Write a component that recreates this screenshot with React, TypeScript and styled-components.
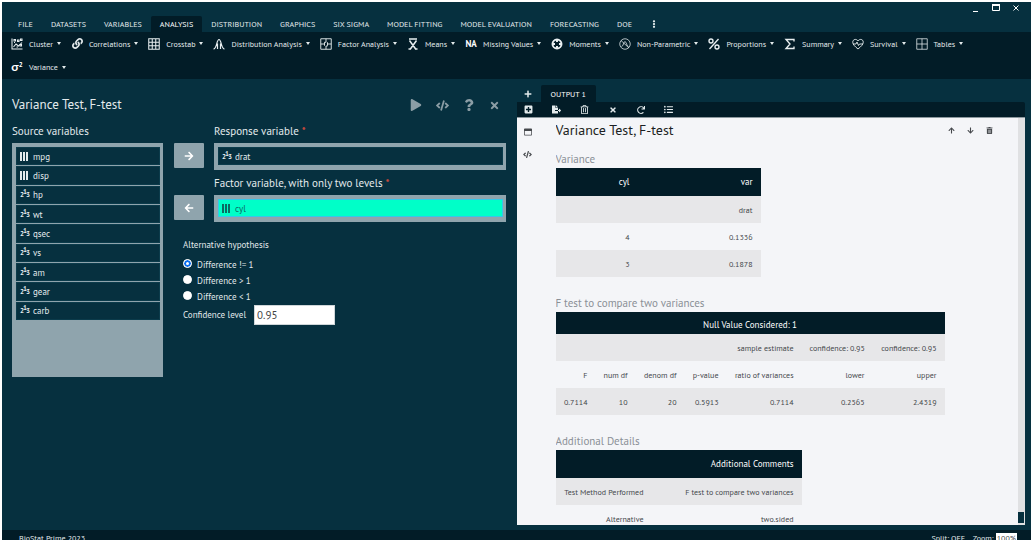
import React from "react";
import styled, { createGlobalStyle, css } from "styled-components";
import {
  FaArrowDown,
  FaArrowLeft,
  FaArrowRight,
  FaArrowUp,
  FaCode,
  FaEllipsisV,
  FaFileExport,
  FaLink,
  FaListUl,
  FaPlay,
  FaPlus,
  FaPlusSquare,
  FaQuestion,
  FaRedo,
  FaTimes,
  FaTrashAlt,
  FaRegTrashAlt,
  FaRegWindowMaximize,
} from "react-icons/fa";

const color = {
  base: "#06303f",
  dark: "#021c27",
  slate: "#8fa4ad",
  light: "#e3eaec",
  accent: "#00ffc8",
  paper: "#f4f5f8",
  stripe: "#e7e7e9",
};

const GlobalStyle = createGlobalStyle`
  *, *::before, *::after { box-sizing: border-box; }
  html, body { margin: 0; background: #fff; }
  body { font-family: "PT Sans", Lato, "Liberation Sans", sans-serif; font-size: 8px; line-height: 12px; }
  button, input { font: inherit; color: inherit; }
  button { margin: 0; padding: 0; border: 0; background: none; cursor: pointer; }
  h1, h2, p, ul { margin: 0; padding: 0; font-weight: 400; }
  svg { display: block; flex: none; }
`;

const Frame = styled.div`
  height: 100vh;
  padding: 2px;
  overflow: hidden;
`;

const Window = styled.div`
  height: 100%;
  display: flex;
  flex-direction: column;
  background: ${color.base};
  color: ${color.light};
  overflow: hidden;
`;

const TitleBar = styled.header`
  display: flex;
  justify-content: space-between;
  align-items: flex-end;
  height: 30px;
  flex: none;
  padding-left: 7px;
`;

const Tabs = styled.nav`
  display: flex;
`;

const Tab = styled.button<{ $active?: boolean }>`
  height: 16px;
  padding: 0 9px;
  border-radius: 2px 2px 0 0;
  white-space: nowrap;
  ${(p) => p.$active && css`background: ${color.dark}; color: #fff;`}
`;

const WindowControls = styled.div`
  display: flex;
  gap: 12px;
  align-self: flex-start;
  padding: 1px 11px 0 0;
`;

const Ribbon = styled.div`
  display: flex;
  flex-wrap: wrap;
  flex: none;
  column-gap: 9px;
  min-height: 47px;
  padding: 0 8px;
  background: ${color.dark};
`;

const RibbonItem = styled.button`
  display: flex;
  align-items: center;
  height: 23px;
  white-space: nowrap;
`;

const RibbonIcon = styled.span`
  display: grid;
  place-items: center;
  width: 14px;
  margin-right: 5px;
`;

const Caret = styled.span`
  margin-left: 4px;
  border: 2px solid transparent;
  border-top: 3px solid ${color.light};
  border-bottom: 0;
`;

const Bold = styled.span<{ $size: number }>`
  font-size: ${(p) => p.$size}px;
  font-weight: 700;
  color: #fff;
  sup { font-size: 7px; line-height: 1px; vertical-align: 4px; }
`;

const Main = styled.main`
  flex: 1;
  min-height: 0;
  display: grid;
  grid-template-columns: minmax(0, 1fr) minmax(0, 1fr);
`;

const Dialog = styled.section`
  padding: 16px 11px 0 10px;
`;

const DialogHead = styled.div`
  display: flex;
  justify-content: space-between;
  align-items: center;
  height: 20px;
  padding-right: 6px;
`;

const DialogTitle = styled.h1`
  font-size: 13px;
  line-height: 20px;
`;

const DialogActions = styled.div`
  display: flex;
  align-items: center;
  gap: 14px;
  color: #8b9da5;
  button { display: grid; place-items: center; min-width: 10px; }
`;

const DialogBody = styled.div`
  display: grid;
  grid-template-columns: 151px minmax(0, 1fr);
  column-gap: 11px;
  padding-top: 9px;
`;

const Label = styled.h2`
  font-size: 11px;
  line-height: 14px;
  padding-bottom: 5px;
`;

const Required = styled.span`
  color: #f0503c;
`;

const Well = styled.ul<{ $tall?: boolean }>`
  list-style: none;
  padding: 4px 3px 4px 4px;
  background: ${color.slate};
  height: ${(p) => (p.$tall ? "234px" : "27px")};
`;

const Rows = styled.div`
  display: grid;
  grid-auto-rows: 1fr;
  gap: 1px;
  height: 173px;
`;

const Variable = styled.li<{ $selected?: boolean }>`
  display: flex;
  align-items: center;
  gap: 3px;
  min-height: 18px;
  padding: 1px 3px 0;
  background: ${(p) => (p.$selected ? color.accent : color.base)};
  color: ${(p) => (p.$selected ? "#0b6a62" : color.light)};
  border: 1px solid ${(p) => (p.$selected ? "#37c6e8" : "#0b3b4b")};
  font-size: 9px;
`;

const Digits = styled.span`
  width: 10px;
  font-size: 7px;
  font-weight: 700;
  line-height: 8px;
  white-space: nowrap;
  sup { font-size: 7px; line-height: 1px; margin: 0 -1px; vertical-align: 3px; }
`;

const Field = styled.div`
  display: grid;
  grid-template-columns: 30px minmax(0, 1fr);
  column-gap: 10px;
  align-items: end;
  padding-bottom: 6px;
`;

const MoveButton = styled.button`
  align-self: end;
  display: grid;
  place-items: center;
  height: 25px;
  margin-bottom: 2px;
  border-radius: 1px;
  background: ${color.slate};
  color: #fff;
`;

const Options = styled.fieldset`
  margin: 10px 0 0 9px;
  padding: 0;
  border: 0;
  min-width: 0;
  font-size: 9px;
  legend { padding: 0; margin-bottom: 5px; line-height: 14px; }
`;

const Choice = styled.label`
  display: flex;
  align-items: center;
  gap: 5px;
  height: 16px;
  input {
    appearance: none;
    width: 9px;
    height: 9px;
    margin: 0 0 3px;
    border: 1px solid #fff;
    border-radius: 50%;
    background: #fff;
  }
  input:checked { box-shadow: inset 0 0 0 2px #0a6ff0; }
`;

const NumberField = styled.label`
  display: flex;
  align-items: center;
  gap: 8px;
  input {
    width: 81px;
    height: 20px;
    padding: 0 2px;
    border: 1px solid #cfd6d9;
    background: #fff;
    color: #444;
    font-size: 11px;
  }
`;

const Output = styled.section`
  display: flex;
  flex-direction: column;
  min-height: 0;
  padding: 6px 6px 5px 0;
`;

const OutputTabs = styled.div`
  display: flex;
  align-items: center;
  height: 17px;
  flex: none;
  padding-left: 7px;
  gap: 9px;
`;

const OutputTab = styled(Tab)`
  height: 17px;
  padding: 0 10px;
`;

const OutputTools = styled.div`
  display: flex;
  align-items: center;
  gap: 18px;
  flex: none;
  height: 16px;
  padding-left: 7px;
  background: ${color.dark};
  border-radius: 0 2px 0 0;
  border-bottom: 1px solid #8c989e;
  button { display: grid; place-items: center; width: 10px; }
`;

const Report = styled.div`
  flex: 1;
  min-height: 0;
  display: grid;
  grid-template-columns: 39px minmax(0, 1fr) 7px;
  overflow: hidden;
  background: ${color.paper};
  color: #45484c;
`;

const SideTools = styled.div`
  display: flex;
  flex-direction: column;
  align-items: center;
  gap: 14px;
  width: 22px;
  padding-top: 10px;
`;

const ReportBody = styled.div`
  overflow: hidden;
`;

const ReportHead = styled.div`
  display: flex;
  align-items: center;
  justify-content: space-between;
  height: 24px;
  padding-right: 25px;
`;

const ReportTitle = styled.h1`
  font-size: 14px;
  color: #1c1f22;
`;

const ReportActions = styled.div`
  display: flex;
  gap: 12px;
`;

const Scroll = styled.div`
  display: flex;
  flex-direction: column;
  justify-content: flex-end;
  padding-bottom: 2px;
  background: #e0e1e3;
`;

const Thumb = styled.div`
  height: 11px;
  margin-right: 1px;
  background: ${color.base};
`;

const TableBlock = styled.section`
  padding: 10px 0 9px;
`;

const Caption = styled.h2`
  font-size: 11px;
  line-height: 14px;
  padding-bottom: 2px;
  color: #8b9097;
`;

const Table = styled.table<{ $width: number; $short?: boolean }>`
  width: ${(p) => p.$width}px;
  max-width: 100%;
  table-layout: fixed;
  border-collapse: collapse;
  th, td {
    height: 27px;
    padding: 0 8px;
    text-align: right;
    white-space: nowrap;
    font-weight: 400;
  }
  thead th {
    height: ${(p) => (p.$short ? 22 : 28)}px;
    background: ${color.dark};
    color: #fff;
    font-size: 9px;
    ${(p) => p.$short && css`text-align: center; padding-top: 4px;`}
  }
  tbody tr:nth-child(odd) { background: ${color.stripe}; }
`;

const Status = styled.footer`
  display: flex;
  justify-content: space-between;
  height: 10px;
  flex: none;
  padding: 3px 14px 0 17px;
  background: ${color.dark};
  overflow: hidden;
  line-height: 10px;
`;

const StatusGroup = styled.div`
  display: flex;
  gap: 8px;
`;

const Zoom = styled.span`
  display: inline-block;
  background: #fff;
  color: #444;
  padding: 0 1px;
`;

const Line = ({ children, w = 1.4, size = 12 }: { children: React.ReactNode; w?: number; size?: number }) => (
  <svg width={size} height={size} viewBox="0 0 24 24" fill="none" stroke="#e9eff1" strokeWidth={w * 1.5} aria-hidden>
    {children}
  </svg>
);

const ClusterIcon = () => (
  <Line w={1.4}>
    <path d="M2 1v21h21M5 18l5-6 5 4 7-7" />
    <path d="M6 3h3v3H6zM13 4h3v3h-3zM19 2h3v3h-3zM6 9h2M18 13h3v3h-3zM11 18h3" />
  </Line>
);
const GridIcon = () => (
  <Line w={1.4}>
    <path d="M1.500 1.500h21v21h-21zM8.500 1.500v21M15.500 1.500v21M1.500 8.500h21M1.500 15.500h21" />
  </Line>
);
const CurveIcon = () => (
  <Line w={1.600}>
    <path d="M1 22c7 0 6-19 11-19s4 19 11 19M9 22V11M15 22V11" />
  </Line>
);
const FactorIcon = () => (
  <Line w={1.200}>
    <path d="M1.500 1.500h21v21h-21zM12 1.500v7M12 16v6.500M1.500 12H9M15 12h7.500M9 8.500v7M15 8.500v7M9 8.500h3M12 16h3" />
  </Line>
);
const MeansIcon = () => (
  <Line w={2}>
    <path d="M4 2h16M5 5l13 18M19 5L6 23M3 22h5M16 22h5" />
  </Line>
);
const MomentsIcon = () => (
  <Line w={2.6}>
    <circle cx="12" cy="12" r="9" />
    <path d="M12 3v5M12 16v5M3 12h5M16 12h5" />
  </Line>
);
const NonParamIcon = () => (
  <Line w={1}>
    <circle cx="12" cy="12" r="10.500" />
    <path d="M4 5l16 15M5 17c4 0 4-10 7-10s3 10 7 10" />
  </Line>
);
const PercentIcon = () => (
  <Line w={1.8}>
    <circle cx="6" cy="6" r="4" />
    <circle cx="18" cy="18" r="4" />
    <path d="M21 2L3 22" />
  </Line>
);
const SumIcon = () => (
  <Line w={1.8}>
    <path d="M20 7V3H4l8 9-8 9h16v-4" />
  </Line>
);
const HeartIcon = () => (
  <Line w={1.2}>
    <path d="M12 22C6 17 1.500 13 1.500 8.500 1.500 2 9 1 12 6c3-5 10.500-4 10.500 2.500C22.500 13 18 17 12 22z" />
    <path d="M2 12h6l2-4 3 7 2-3h7" />
  </Line>
);
const TableIcon = () => (
  <Line w={1}>
    <path d="M1.500 1.500h21v21h-21zM12 1.500v21M1.500 12h21" />
  </Line>
);
const BarsIcon = () => (
  <svg width="10" height="9" viewBox="0 0 10 9" fill="currentColor" aria-hidden>
    <path d="M0 0h2v9H0zM3 0h2v9h-2zM6 0h2v9H6z" />
  </svg>
);

const menu = [
  "FILE", "DATASETS", "VARIABLES", "ANALYSIS", "DISTRIBUTION", "GRAPHICS", "SIX SIGMA",
  "MODEL FITTING", "MODEL EVALUATION", "FORECASTING", "DOE",
];

const ribbon: [string, React.ReactNode][] = [
  ["Cluster", <ClusterIcon />],
  ["Correlations", <FaLink size={11} />],
  ["Crosstab", <GridIcon />],
  ["Distribution Analysis", <CurveIcon />],
  ["Factor Analysis", <FactorIcon />],
  ["Means", <MeansIcon />],
  ["Missing Values", <Bold $size={9}>NA</Bold>],
  ["Moments", <MomentsIcon />],
  ["Non-Parametric", <NonParamIcon />],
  ["Proportions", <PercentIcon />],
  ["Summary", <SumIcon />],
  ["Survival", <HeartIcon />],
  ["Tables", <TableIcon />],
  ["Variance", <Bold $size={12}>σ<sup>2</sup></Bold>],
];

const sources: [string, boolean][] = [
  ["mpg", true], ["disp", true], ["hp", false], ["wt", false], ["qsec", false],
  ["vs", false], ["am", false], ["gear", false], ["carb", false],
];

const VariableRow = ({ name, factor, selected }: { name: string; factor?: boolean; selected?: boolean }) => (
  <Variable $selected={selected}>
    {factor ? <BarsIcon /> : <Digits>2<sup>1</sup>3</Digits>}
    {name}
  </Variable>
);

export default function App() {
  return (
    <Frame>
      <GlobalStyle />
      <Window>
        <TitleBar>
          <Tabs>
            {menu.map((m) => (
              <Tab key={m} $active={m === "ANALYSIS"}>{m}</Tab>
            ))}
            <Tab aria-label="More"><FaEllipsisV size={8} /></Tab>
          </Tabs>
          <WindowControls>
            <button aria-label="Minimize">
              <svg width="8" height="10" viewBox="0 0 8 10"><path d="M1 8.500h5" stroke="#fff" /></svg>
            </button>
            <button aria-label="Maximize">
              <svg width="8" height="10" viewBox="0 0 8 10"><path d="M0.500 2h7M0.500 2v5.500h7V2" stroke="#fff" fill="none" /><path d="M0 2h8" stroke="#fff" strokeWidth="2" /></svg>
            </button>
            <button aria-label="Close">
              <svg width="8" height="10" viewBox="0 0 8 10"><path d="M1.500 2.500l5 5M6.500 2.500l-5 5" stroke="#fff" /></svg>
            </button>
          </WindowControls>
        </TitleBar>

        <Ribbon>
          {ribbon.map(([name, icon]) => (
            <RibbonItem key={name}>
              <RibbonIcon>{icon}</RibbonIcon>
              {name}
              <Caret />
            </RibbonItem>
          ))}
        </Ribbon>

        <Main>
          <Dialog>
            <DialogHead>
              <DialogTitle>Variance Test, F-test</DialogTitle>
              <DialogActions>
                <button aria-label="Run"><FaPlay size={12} /></button>
                <button aria-label="Code"><FaCode size={13} /></button>
                <button aria-label="Help"><FaQuestion size={12} /></button>
                <button aria-label="Close"><FaTimes size={11} /></button>
              </DialogActions>
            </DialogHead>
            <DialogBody>
              <div>
                <Label>Source variables</Label>
                <Well as="div" $tall>
                  <Rows as="ul">
                    {sources.map(([n, f]) => <VariableRow key={n} name={n} factor={f} />)}
                  </Rows>
                </Well>
              </div>
              <div>
                <Field>
                  <MoveButton aria-label="Move right"><FaArrowRight size={10} /></MoveButton>
                  <div>
                    <Label>Response variable <Required>*</Required></Label>
                    <Well><VariableRow name="drat" /></Well>
                  </div>
                </Field>
                <Field>
                  <MoveButton aria-label="Move left"><FaArrowLeft size={10} /></MoveButton>
                  <div>
                    <Label>Factor variable, with only two levels <Required>*</Required></Label>
                    <Well><VariableRow name="cyl" factor selected /></Well>
                  </div>
                </Field>
                <Options>
                  <legend>Alternative hypothesis</legend>
                  {["Difference != 1", "Difference > 1", "Difference < 1"].map((t, i) => (
                    <Choice key={t}>
                      <input type="radio" name="alternative" defaultChecked={i === 0} />
                      {t}
                    </Choice>
                  ))}
                  <NumberField>
                    Confidence level
                    <input type="text" defaultValue="0.95" />
                  </NumberField>
                </Options>
              </div>
            </DialogBody>
          </Dialog>

          <Output>
            <OutputTabs>
              <button aria-label="New output"><FaPlus size={8} /></button>
              <OutputTab $active>OUTPUT 1</OutputTab>
            </OutputTabs>
            <OutputTools>
              <button aria-label="Add"><FaPlusSquare size={9} /></button>
              <button aria-label="Export"><FaFileExport size={9} /></button>
              <button aria-label="Delete"><FaRegTrashAlt size={9} /></button>
              <button aria-label="Clear"><FaTimes size={8} /></button>
              <button aria-label="Refresh"><FaRedo size={8} /></button>
              <button aria-label="List"><FaListUl size={9} /></button>
            </OutputTools>
            <Report>
              <SideTools>
                <button aria-label="Window"><FaRegWindowMaximize size={8} /></button>
                <button aria-label="Source"><FaCode size={9} /></button>
              </SideTools>
              <ReportBody>
                <ReportHead>
                  <ReportTitle>Variance Test, F-test</ReportTitle>
                  <ReportActions>
                    <button aria-label="Move up"><FaArrowUp size={7} /></button>
                    <button aria-label="Move down"><FaArrowDown size={7} /></button>
                    <button aria-label="Remove"><FaTrashAlt size={7} /></button>
                  </ReportActions>
                </ReportHead>

                <TableBlock>
                  <Caption>Variance</Caption>
                  <Table $width={205}>
                    <colgroup><col width={82} /><col /></colgroup>
                    <thead><tr><th>cyl</th><th>var</th></tr></thead>
                    <tbody>
                      <tr><td /><td>drat</td></tr>
                      <tr><td>4</td><td>0.1336</td></tr>
                      <tr><td>3</td><td>0.1878</td></tr>
                    </tbody>
                  </Table>
                </TableBlock>

                <TableBlock>
                  <Caption>F test to compare two variances</Caption>
                  <Table $width={389} $short>
                    <colgroup>
                      {[40, 40, 49, 42, 75, 71, 72].map((w, i) => <col key={i} width={w} />)}
                    </colgroup>
                    <thead><tr><th colSpan={7}>Null Value Considered: 1</th></tr></thead>
                    <tbody>
                      <tr><td /><td /><td /><td /><td>sample estimate</td><td>confidence: 0.95</td><td>confidence: 0.95</td></tr>
                      <tr><td>F</td><td>num df</td><td>denom df</td><td>p-value</td><td>ratio of variances</td><td>lower</td><td>upper</td></tr>
                      <tr><td>0.7114</td><td>10</td><td>20</td><td>0.5913</td><td>0.7114</td><td>0.2565</td><td>2.4319</td></tr>
                    </tbody>
                  </Table>
                </TableBlock>

                <TableBlock>
                  <Caption>Additional Details</Caption>
                  <Table $width={246}>
                    <colgroup><col width={96} /><col /></colgroup>
                    <thead><tr><th /><th>Additional Comments</th></tr></thead>
                    <tbody>
                      <tr><td>Test Method Performed</td><td>F test to compare two variances</td></tr>
                      <tr><td>Alternative</td><td>two.sided</td></tr>
                    </tbody>
                  </Table>
                </TableBlock>
              </ReportBody>
              <Scroll><Thumb /></Scroll>
            </Report>
          </Output>
        </Main>

        <Status>
          <span>BioStat Prime 2023</span>
          <StatusGroup>
            <span>Split: OFF</span>
            <span>Zoom: <Zoom>100%</Zoom></span>
          </StatusGroup>
        </Status>
      </Window>
    </Frame>
  );
}
